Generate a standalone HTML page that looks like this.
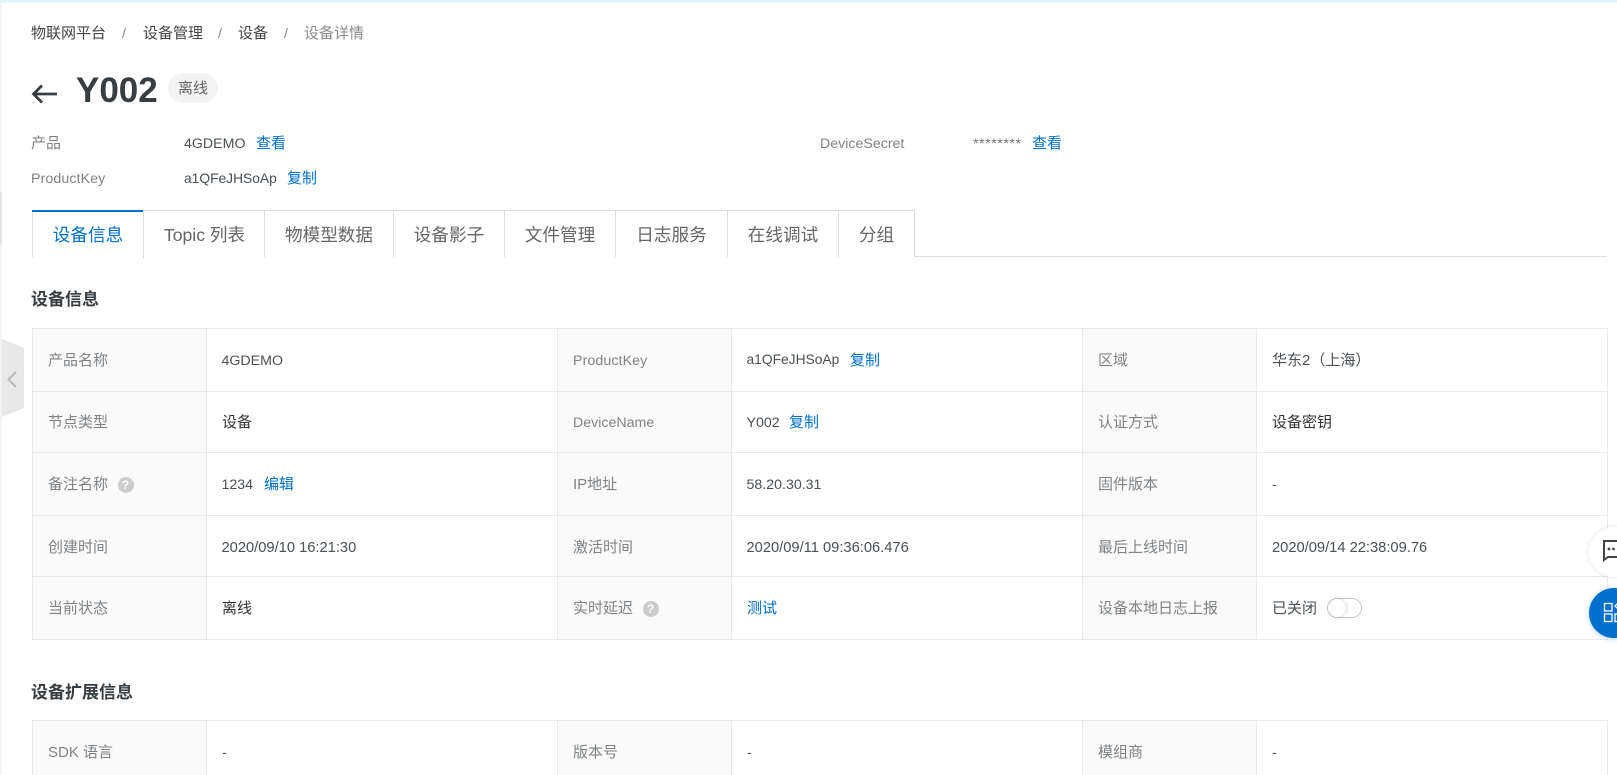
<!DOCTYPE html>
<html lang="zh"><head><meta charset="utf-8"><title>设备详情</title>
<style>
html,body{margin:0;padding:0;width:1617px;height:775px;overflow:hidden;background:#fff}
body{position:relative;font-family:"Liberation Sans","Noto Sans CJK SC",sans-serif;font-size:14.2px;color:#4a5054}
.a{position:absolute;white-space:nowrap;line-height:20px}
.c{font-size:15px}
.d{font-size:14.7px}
.l{color:#7f8386}
.k{color:#0070cc}
.b{position:absolute}
.h{background:#e9e9e9;position:absolute}
.f{position:absolute;background:#fafafa}
.tab{position:absolute;top:211px;height:45px;line-height:48px;text-align:center;font-size:17.6px;color:#666;border-right:1px solid #dcdcdc;box-sizing:border-box;background:#fff}
.q{position:absolute;width:16px;height:16px;border-radius:50%;background:#ccc;color:#fff;font-size:12px;font-weight:700;line-height:16px;text-align:center}
</style></head><body>
<div class="b" style="left:0;top:0;width:1617px;height:3px;background:#e6f4ff"></div>
<div class="b" style="left:0;top:3px;width:2px;height:772px;background:#f3f3f3"></div>
<div class="b" style="left:0;top:192px;width:2px;height:52px;background:#e4e4e4"></div>

<!-- breadcrumb -->
<div class="a c" style="left:31px;top:24px;color:#444">物联网平台</div>
<div class="a" style="left:122px;top:24px;color:#888">/</div>
<div class="a c" style="left:143px;top:24px;color:#444">设备管理</div>
<div class="a" style="left:218px;top:24px;color:#888">/</div>
<div class="a c" style="left:238px;top:24px;color:#444">设备</div>
<div class="a" style="left:284px;top:24px;color:#888">/</div>
<div class="a c" style="left:304px;top:24px;color:#8a8a8a">设备详情</div>

<!-- title -->
<svg class="b" style="left:30px;top:81px" width="30" height="26" viewBox="0 0 30 26"><path d="M3 13H27M12 4.500L3.500 13L12 21.500" fill="none" stroke="#373d41" stroke-width="2.8"/></svg>
<div class="a" style="left:76px;top:71px;font-size:35px;line-height:40px;font-weight:700;color:#373d41">Y002</div>
<div class="b" style="left:168px;top:73px;width:50px;height:30px;border-radius:15px;background:#f4f4f4"></div>
<div class="a" style="left:178px;top:79px;font-size:15px;color:#666">离线</div>

<!-- info -->
<div class="a c l" style="left:31px;top:134px">产品</div>
<div class="a" style="left:184px;top:134px">4GDEMO</div>
<div class="a c k" style="left:256px;top:134px">查看</div>
<div class="a l" style="left:820px;top:134px">DeviceSecret</div>
<div class="a" style="left:973px;top:134px;color:#777;letter-spacing:.55px">********</div>
<div class="a c k" style="left:1032px;top:134px">查看</div>
<div class="a l" style="left:31px;top:169px;letter-spacing:.1px">ProductKey</div>
<div class="a" style="left:184px;top:169px;font-size:13.8px">a1QFeJHSoAp</div>
<div class="a c k" style="left:287px;top:169px">复制</div>

<!-- tabs -->
<div class="b" style="left:32px;top:256px;width:1575px;height:1px;background:#dedede"></div>
<div class="b" style="left:143px;top:210px;width:772px;height:1px;background:#dcdcdc"></div>
<div class="b" style="left:32px;top:210px;width:1px;height:47px;background:#dcdcdc"></div>
<div class="tab" style="left:33px;width:111px;color:#0070cc;height:47px">设备信息</div>
<div class="b" style="left:32px;top:210px;width:111px;height:2px;background:#0070cc"></div>
<div class="tab" style="left:144px;width:121px;height:46px;padding-left:1px">Topic 列表</div>
<div class="tab" style="left:265px;width:129px;height:46px">物模型数据</div>
<div class="tab" style="left:394px;width:111px;height:46px">设备影子</div>
<div class="tab" style="left:505px;width:111px;height:46px">文件管理</div>
<div class="tab" style="left:616px;width:112px;height:46px">日志服务</div>
<div class="tab" style="left:728px;width:111px;height:46px">在线调试</div>
<div class="tab" style="left:839px;width:76px;height:46px">分组</div>

<div class="a" style="left:31px;top:290px;font-size:17px;font-weight:700;color:#373d41">设备信息</div>

<!-- table 1 fills -->
<div class="f" style="left:32px;top:328px;width:175px;height:311px"></div>
<div class="f" style="left:558px;top:328px;width:174px;height:311px"></div>
<div class="f" style="left:1083px;top:328px;width:174px;height:311px"></div>
<div class="h" style="left:32px;top:328px;width:1576px;height:1px"></div>
<div class="h" style="left:32px;top:391px;width:1576px;height:1px"></div>
<div class="h" style="left:32px;top:452px;width:1576px;height:1px"></div>
<div class="h" style="left:32px;top:515px;width:1576px;height:1px"></div>
<div class="h" style="left:32px;top:576px;width:1576px;height:1px"></div>
<div class="h" style="left:32px;top:639px;width:1576px;height:1px"></div>
<div class="h" style="left:32px;top:328px;width:1px;height:312px"></div>
<div class="h" style="left:206px;top:328px;width:1px;height:312px"></div>
<div class="h" style="left:557px;top:328px;width:1px;height:312px"></div>
<div class="h" style="left:731px;top:328px;width:1px;height:312px"></div>
<div class="h" style="left:1082px;top:328px;width:1px;height:312px"></div>
<div class="h" style="left:1256px;top:328px;width:1px;height:312px"></div>
<div class="h" style="left:1607px;top:328px;width:1px;height:312px"></div>

<!-- row 1 -->
<div class="a c l" style="left:48px;top:351px">产品名称</div>
<div class="a" style="left:221.500px;top:351px">4GDEMO</div>
<div class="a l" style="left:573px;top:351px;letter-spacing:.1px">ProductKey</div>
<div class="a" style="left:746.500px;top:350px;font-size:13.800px">a1QFeJHSoAp</div>
<div class="a c k" style="left:850px;top:351px">复制</div>
<div class="a c l" style="left:1098px;top:351px">区域</div>
<div class="a c" style="left:1272px;top:351px">华东2（上海）</div>
<!-- row 2 -->
<div class="a c l" style="left:48px;top:413px">节点类型</div>
<div class="a c" style="left:222px;top:413px;color:#333">设备</div>
<div class="a l" style="left:573px;top:413px">DeviceName</div>
<div class="a" style="left:746.500px;top:413px">Y002</div>
<div class="a c k" style="left:789px;top:413px">复制</div>
<div class="a c l" style="left:1098px;top:413px">认证方式</div>
<div class="a c" style="left:1272px;top:413px;color:#333">设备密钥</div>
<!-- row 3 -->
<div class="a c l" style="left:48px;top:475px">备注名称</div>
<div class="q" style="left:117.500px;top:477px">?</div>
<div class="a" style="left:221.500px;top:475px">1234</div>
<div class="a c k" style="left:264px;top:475px">编辑</div>
<div class="a c l" style="left:573px;top:475px">IP地址</div>
<div class="a" style="left:746.500px;top:475px">58.20.30.31</div>
<div class="a c l" style="left:1098px;top:475px">固件版本</div>
<div class="a" style="left:1272px;top:475px">-</div>
<!-- row 4 -->
<div class="a c l" style="left:48px;top:538px">创建时间</div>
<div class="a d" style="left:221.500px;top:538px">2020/09/10 16:21:30</div>
<div class="a c l" style="left:573px;top:538px">激活时间</div>
<div class="a d" style="left:746.500px;top:538px">2020/09/11 09:36:06.476</div>
<div class="a c l" style="left:1098px;top:538px">最后上线时间</div>
<div class="a d" style="left:1272px;top:538px">2020/09/14 22:38:09.76</div>
<!-- row 5 -->
<div class="a c l" style="left:48px;top:599px">当前状态</div>
<div class="a c" style="left:222px;top:599px;color:#333">离线</div>
<div class="a c l" style="left:573px;top:599px">实时延迟</div>
<div class="q" style="left:642.500px;top:601px">?</div>
<div class="a c k" style="left:747px;top:599px">测试</div>
<div class="a c l" style="left:1098px;top:599px">设备本地日志上报</div>
<div class="a c" style="left:1272px;top:599px">已关闭</div>
<div class="b" style="left:1327px;top:598px;width:35px;height:20px;border:1px solid #c6c6d2;border-radius:11px;box-sizing:border-box;background:#fff"></div>
<div class="b" style="left:1328px;top:599px;width:18px;height:18px;border-radius:50%;background:#fff;box-shadow:1px 0 3px rgba(0,0,0,.18)"></div>

<div class="a" style="left:31px;top:683px;font-size:17px;font-weight:700;color:#373d41">设备扩展信息</div>

<!-- table 2 -->
<div class="f" style="left:32px;top:720px;width:175px;height:55px"></div>
<div class="f" style="left:558px;top:720px;width:174px;height:55px"></div>
<div class="f" style="left:1083px;top:720px;width:174px;height:55px"></div>
<div class="h" style="left:32px;top:720px;width:1576px;height:1px"></div>
<div class="h" style="left:32px;top:720px;width:1px;height:55px"></div>
<div class="h" style="left:206px;top:720px;width:1px;height:55px"></div>
<div class="h" style="left:557px;top:720px;width:1px;height:55px"></div>
<div class="h" style="left:731px;top:720px;width:1px;height:55px"></div>
<div class="h" style="left:1082px;top:720px;width:1px;height:55px"></div>
<div class="h" style="left:1256px;top:720px;width:1px;height:55px"></div>
<div class="h" style="left:1607px;top:720px;width:1px;height:55px"></div>
<div class="a c l" style="left:48px;top:743px">SDK 语言</div>
<div class="a" style="left:222px;top:743px">-</div>
<div class="a c l" style="left:573px;top:743px">版本号</div>
<div class="a" style="left:747px;top:743px">-</div>
<div class="a c l" style="left:1098px;top:743px">模组商</div>
<div class="a" style="left:1272px;top:743px">-</div>

<!-- sidebar handle -->
<svg class="b" style="left:2px;top:339px" width="22" height="78" viewBox="0 0 22 78"><path d="M0 0L22 9V69L0 78Z" fill="#e8e8e8"/><path d="M14 33L6.500 40.500L14 48" fill="none" stroke="#b8b8b8" stroke-width="2"/></svg>

<!-- floating buttons -->
<div class="b" style="left:1589px;top:527px;width:50px;height:50px;border-radius:50%;background:#fff;box-shadow:0 0 6px rgba(0,0,0,.12)"></div>
<svg class="b" style="left:1602px;top:538px" width="15" height="26" viewBox="0 0 15 26"><path d="M2 3H20V19H6L2 22Z" fill="none" stroke="#444" stroke-width="2"/><circle cx="7" cy="11" r="1.400" fill="#444"/><circle cx="11.500" cy="11" r="1.400" fill="#444"/></svg>
<div class="b" style="left:1589px;top:588px;width:50px;height:50px;border-radius:50%;background:#0070cc;box-shadow:0 1px 6px rgba(0,112,204,.3)"></div>
<svg class="b" style="left:1600px;top:600px" width="17" height="26" viewBox="0 0 17 26"><g fill="none" stroke="#fff" stroke-width="1.300"><rect x="4.500" y="3.500" width="7.500" height="7.500"/><rect x="4.500" y="14" width="7.500" height="7.500"/><rect x="15" y="14" width="7" height="7.500"/><path d="M18.500 2.500L22 6L18.500 9.500L15 6Z"/></g></svg>
</body></html>
